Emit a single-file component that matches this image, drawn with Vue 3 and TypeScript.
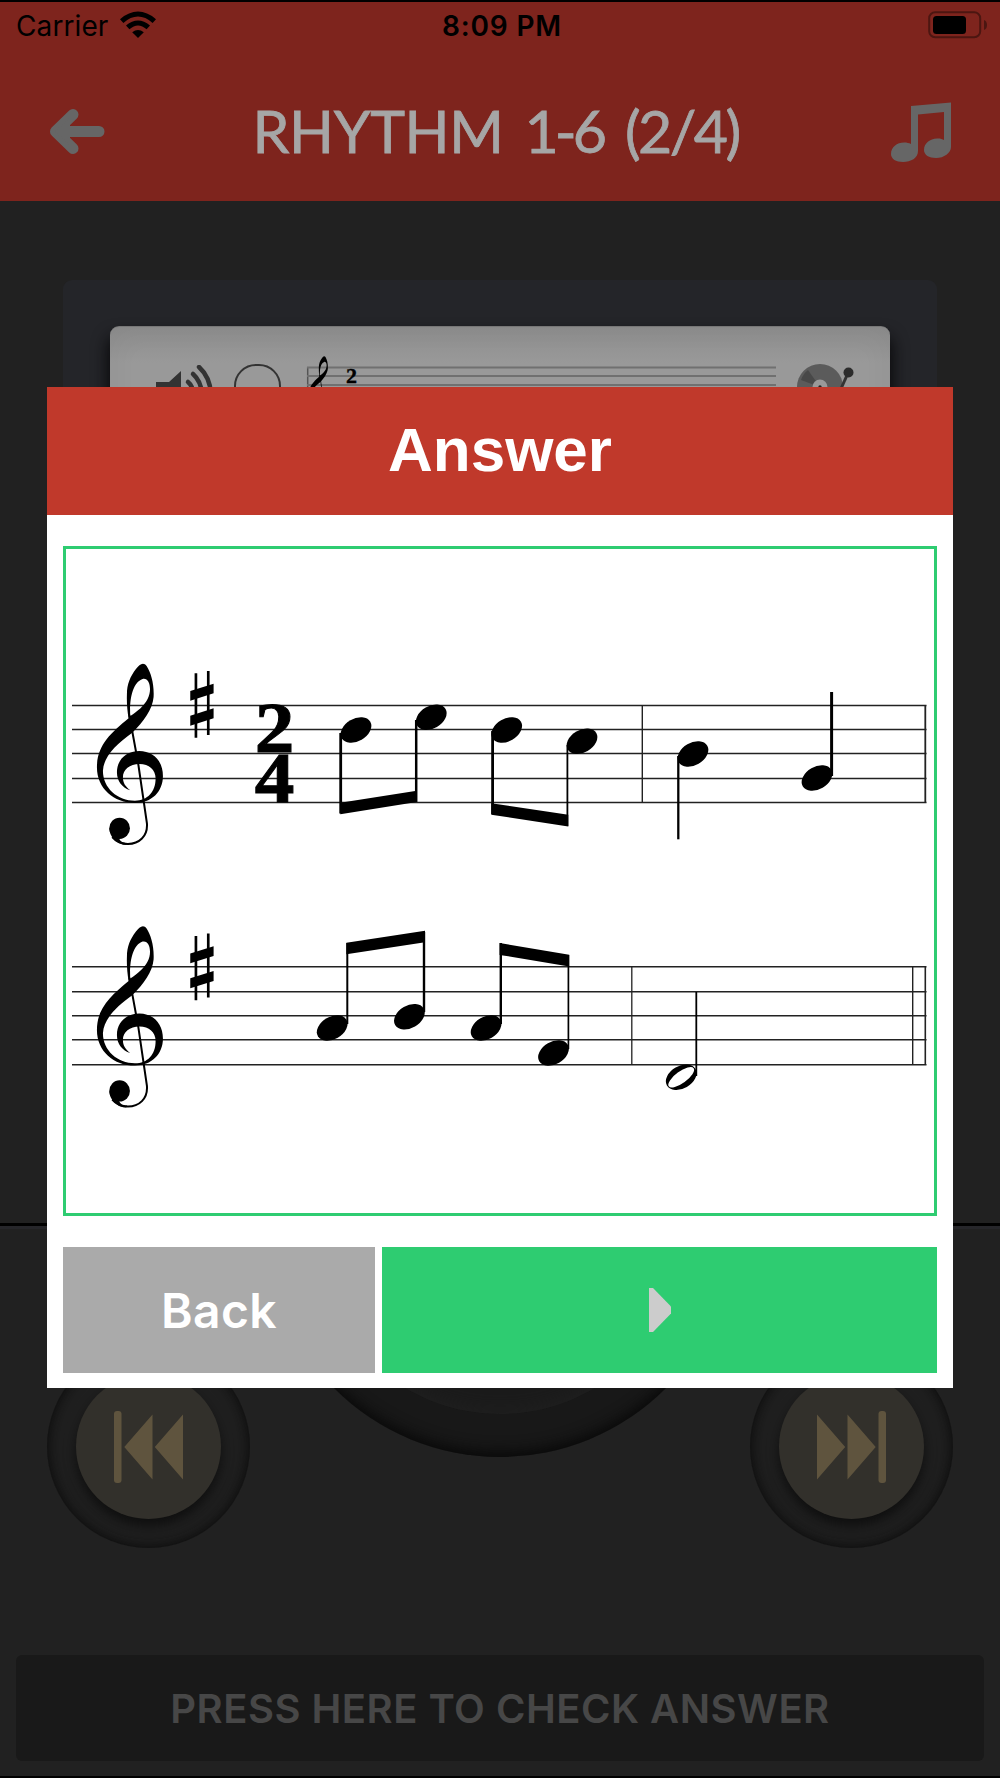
<script setup lang="ts">
interface INote {
    x: number;
    y: number;
    stemX: number;
    stemFrom: number;
    stemTo: number;
    stemWidth: number;
    half?: boolean;
}

interface IBarline {
    x: number;
    width: number;
}

interface IStaff {
    lines: number[];
    clefY: number;
    notes: INote[];
    beams: string[];
    barlines: IBarline[];
}

const staves: IStaff[] = [
    {
        lines: [705.4, 729.4, 753.4, 778.4, 802.5],
        clefY: 640,
        notes: [
            { x: 356, y: 730, stemX: 340.7, stemFrom: 733, stemTo: 813.5, stemWidth: 2.8 },
            { x: 431.3, y: 717.3, stemX: 416.2, stemFrom: 720, stemTo: 802, stemWidth: 2.5 },
            { x: 506.7, y: 730, stemX: 492.6, stemFrom: 731, stemTo: 814, stemWidth: 2.8 },
            { x: 582, y: 741.3, stemX: 567.4, stemFrom: 745, stemTo: 826, stemWidth: 1.8 },
            { x: 693, y: 754, stemX: 678.3, stemFrom: 756, stemTo: 839.3, stemWidth: 2.3 },
            { x: 817, y: 778, stemX: 831.6, stemFrom: 692, stemTo: 776, stemWidth: 3 },
        ],
        beams: [
            "340.3,802.7 416.8,790.7 416.8,802 340.3,814.3",
            "491.3,803.3 568.3,814.8 568.3,826.4 491.3,814.8",
        ],
        barlines: [
            { x: 642.3, width: 1.4 },
            { x: 925.3, width: 1.8 },
        ],
    },
    {
        lines: [966.8, 991.8, 1015.8, 1039.8, 1064.8],
        clefY: 902.6,
        notes: [
            { x: 332.2, y: 1028, stemX: 347.3, stemFrom: 943, stemTo: 1024, stemWidth: 2 },
            { x: 409.4, y: 1016.7, stemX: 424, stemFrom: 932, stemTo: 1012, stemWidth: 2.4 },
            { x: 486.1, y: 1028, stemX: 500.8, stemFrom: 943, stemTo: 1024, stemWidth: 2.4 },
            { x: 553.5, y: 1053, stemX: 568.4, stemFrom: 955, stemTo: 1049, stemWidth: 1.7 },
            { x: 681.2, y: 1077.3, stemX: 696.3, stemFrom: 992, stemTo: 1076, stemWidth: 1.8, half: true },
        ],
        beams: [
            "346.4,942.7 425,930.7 425,942.3 346.4,954.2",
            "499.6,943 569.2,954.7 569.2,966.4 499.6,954.9",
        ],
        barlines: [
            { x: 631.8, width: 1.3 },
            { x: 912.7, width: 1.4 },
            { x: 925.3, width: 1.6 },
        ],
    },
];

const trackLines = [11.5, 20, 29];
</script>

<template>
    <div class="screen">
        <!-- shared treble clef -->
        <svg class="defs">
            <defs>
                <g id="clef">
                    <path
                        fill-rule="evenodd"
                        d="M250 71C243 71 236 78 229 87C212 109 202 133 202 162C201 188 203 211 207 235C151 281 112 318 112 382C112 446 163 489 226 489C276 489 310 455 310 408C310 362 280 333 239 333C200 333 172 359 172 397C172 423 188 444 212 451C198 440 190 430 190 412C190 389 210 372 240 372C268 372 288 389 288 415C288 456 264 482 226 482C174 482 130 444 130 392C132 350 169 313 218 278C252 246 279 207 282 171C284 131 274 98 261 78C258 73 254 71 250 71ZM212 228C209 180 218 128 249 117C271 112 278 151 264 177C252 199 235 213 212 228Z"
                    />
                    <path
                        d="M209 225L236 372L262 550C265 589 238 612 205 612C187 612 169 604 158 591"
                        fill="none"
                        stroke="#000"
                        stroke-width="6"
                    />
                    <ellipse cx="180" cy="565" rx="31" ry="32" />
                    <path d="M149 565C150 592 171 612 200 615L203 609C188 608 181 603 179 596Z" />
                </g>
            </defs>
        </svg>

        <header class="header">
            <div class="status">
                <div class="carrier">
                    <span>Carrier</span>
                    <svg width="38" height="28" viewBox="0 0 38 28">
                        <path d="M1 8.2Q19-7 37 8.2L33.6 12Q19-.8 4.4 12Z" />
                        <path d="M7 14.5Q19 4.5 31 14.5L27.6 18.3Q19 10.5 10.4 18.3Z" />
                        <path d="M13.2 21.3Q19 16.5 24.8 21.3L19 27Z" />
                    </svg>
                </div>
                <span class="time">8:09 PM</span>
                <svg class="battery" width="60" height="28" viewBox="0 0 60 28">
                    <rect x="1.2" y="1.2" width="51" height="25" rx="6" fill="none" stroke="#4c1611" stroke-width="2" />
                    <rect x="5" y="5" width="33" height="18" rx="3.5" />
                    <path d="M56 9Q59 10 59 14T56 19Z" fill="#4c1611" />
                </svg>
            </div>
            <div class="nav">
                <svg width="56" height="47" viewBox="0 0 56 47">
                    <path
                        d="M50 23.5H8M24 6.5L6.5 23.5L24 40.5"
                        fill="none"
                        stroke="#666"
                        stroke-width="11"
                        stroke-linecap="round"
                        stroke-linejoin="round"
                    />
                    <path d="M6 23.5L21 10V37Z" fill="#666" />
                </svg>
                <h1>
                    <span class="word">RHYTHM</span>
                    <span class="number">1-6</span>
                    <span class="beat">(2/4)</span>
                </h1>
                <svg class="song" width="60" height="60" viewBox="0 0 60 60">
                    <path
                        fill="#666"
                        d="M20 4L60 .5V45C60 51 53 56 45 56C38 56 33 53 33 48C33 41 39 37 46 36.5C49 36.2 51 37 53 38V10L27 12.5V49C27 56 20 60 12 60C5 60 0 57 0 52C0 45 6 40.5 13 40.5C16 40.5 18 41 20 42Z"
                    />
                </svg>
            </div>
        </header>

        <main class="stage">
            <div class="panel">
                <div class="track">
                    <svg class="speaker" width="58" height="60" viewBox="0 0 58 60">
                        <path d="M0 17H13L25 6V46L13 35H0Z" fill="#333" />
                        <g fill="none" stroke="#333" stroke-width="4.5" stroke-linecap="round">
                            <path d="M32 17Q37 21 37 29" />
                            <path d="M37 9Q45 16 46 29" />
                            <path d="M43 2Q54 12 55 29" />
                        </g>
                    </svg>
                    <div class="check"></div>
                    <svg class="mini-staff" width="469" height="60" viewBox="0 0 469 60">
                        <path d="M.7 11V48" stroke="#555" stroke-width="1.5" />
                        <path
                            v-for="y in trackLines"
                            :key="y"
                            :d="`M0 ${y}H469`"
                            stroke="#707070"
                            stroke-width="2"
                        />
                        <use href="#clef" transform="translate(-11 -8.5) scale(.113 .123)" />
                        <text x="44.5" y="27" class="meter small">2</text>
                    </svg>
                    <svg class="disc" width="60" height="60" viewBox="0 0 60 60">
                        <circle cx="23" cy="23" r="23" fill="#5b5b5b" />
                        <path d="M23 23L4 16A20 20 0 0 1 11 6Z" fill="#484848" />
                        <circle cx="23" cy="23" r="7.5" fill="#999" />
                        <circle cx="23" cy="23" r="1.7" fill="#222" />
                        <path d="M51 9L43 27" stroke="#333" stroke-width="3" />
                        <circle cx="51.5" cy="8.5" r="5" fill="#2c2c2c" />
                    </svg>
                </div>
            </div>
        </main>

        <section class="controls">
            <div class="knob">
                <div class="cap">
                    <svg width="69" height="72" viewBox="0 0 69 72">
                        <rect width="7.5" height="72" rx="3" />
                        <path d="M10.3 36L38.5 3.5V68.5ZM40.8 36L69 3.5V68.5Z" />
                    </svg>
                </div>
            </div>
            <div class="dial">
                <div class="dial-face"></div>
            </div>
            <div class="knob">
                <div class="cap">
                    <svg class="flip" width="69" height="72" viewBox="0 0 69 72">
                        <rect width="7.5" height="72" rx="3" />
                        <path d="M10.3 36L38.5 3.5V68.5ZM40.8 36L69 3.5V68.5Z" />
                    </svg>
                </div>
            </div>
        </section>

        <footer class="footer">
            <button class="check-answer">PRESS HERE TO CHECK ANSWER</button>
        </footer>

        <div class="modal">
            <h2>Answer</h2>
            <div class="modal-body">
                <svg class="score" viewBox="66 549 868 664">
                    <g v-for="(staff, i) in staves" :key="i">
                        <path
                            v-for="y in staff.lines"
                            :key="y"
                            :d="`M72 ${y}H926.5`"
                            class="line"
                        />
                        <path
                            v-for="bar in staff.barlines"
                            :key="bar.x"
                            :d="`M${bar.x} ${staff.lines[0]}V${staff.lines[4]}`"
                            :stroke-width="bar.width"
                            stroke="#222"
                        />
                        <g :transform="`translate(59.6 ${staff.clefY}) scale(.33333)`">
                            <use href="#clef" />
                            <path d="M409 100V293M446 93V285" stroke="#000" stroke-width="8" />
                            <path d="M392 153L462 131V160L392 182ZM392 227L462 205V235L392 257Z" />
                        </g>
                        <g v-for="note in staff.notes" :key="note.x">
                            <path
                                :d="`M${note.stemX} ${note.stemFrom}V${note.stemTo}`"
                                :stroke-width="note.stemWidth"
                                stroke="#000"
                            />
                            <g :transform="`translate(${note.x} ${note.y})`">
                                <ellipse rx="16.5" ry="11.2" transform="rotate(-30)" />
                                <ellipse
                                    v-if="note.half"
                                    rx="15.4"
                                    ry="5.8"
                                    fill="#fff"
                                    transform="rotate(-36)"
                                />
                            </g>
                        </g>
                        <polygon v-for="beam in staff.beams" :key="beam" :points="beam" />
                    </g>
                    <g transform="translate(274.6 0) scale(1.1 1)">
                        <text y="752.5" class="meter">2</text>
                        <text y="802" class="meter">4</text>
                    </g>
                </svg>
                <div class="actions">
                    <button class="back">Back</button>
                    <button class="next">
                        <svg width="22" height="44" viewBox="0 0 22 44">
                            <path d="M0 0H4L22 18.5V25.5L4 44H0Z" fill="#ccc" />
                        </svg>
                    </button>
                </div>
            </div>
        </div>
    </div>
</template>

<style>
body {
    background: #212121;
}
</style>

<style scoped>
* {
    box-sizing: border-box;
}

.screen {
    position: relative;
    display: flex;
    flex-direction: column;
    width: 1000px;
    height: 1778px;
    overflow: hidden;
    background: #212121;
    border-top: 2px solid #000;
    border-bottom: 2px solid #000;
    font-family: Inter, "Liberation Sans", sans-serif;
}

.defs {
    position: absolute;
    width: 0;
    height: 0;
}

svg {
    display: block;
    flex: none;
}

h1,
h2 {
    margin: 0;
}

button {
    border: 0;
    padding: 0;
    font-family: inherit;
}

.header {
    height: 199px;
    flex: none;
    background: #7e241d;
}

.status {
    display: grid;
    grid-template-columns: 1fr auto 1fr;
    height: 46px;
    padding: 1px 12px 0 16px;
    align-items: center;
    font-size: 28px;
    line-height: 46px;
}

.carrier {
    display: flex;
    gap: 11px;
    align-items: center;
    letter-spacing: 0.1px;
}

.carrier svg {
    margin-top: -2px;
}

.time {
    font-weight: 600;
    letter-spacing: 0.8px;
}

.battery {
    justify-self: end;
    margin-top: -2px;
}

.nav {
    display: flex;
    align-items: center;
    justify-content: space-between;
    height: 168px;
    padding: 0 49px 0 49px;
    margin-top: -1px;
}

.nav h1 {
    display: flex;
    width: 496px;
    margin-left: 5px;
    font-family: Lato, sans-serif;
    font-size: 59px;
    font-weight: 400;
    line-height: 70px;
    color: #a6a6a6;
    white-space: nowrap;
    -webkit-text-stroke: 0.8px #a6a6a6;
}

.word {
    letter-spacing: -0.4px;
}

.number {
    margin-left: 21px;
    letter-spacing: -4px;
}

.beat {
    margin-left: 22px;
    letter-spacing: -2.6px;
}

.song {
    margin-top: 2px;
}

.stage {
    height: 1022px;
    flex: none;
    padding: 79px 63px 0;
}

.panel {
    height: 860px;
    padding: 46px 47px;
    border-radius: 9px;
    background: #242529;
}

.track {
    display: flex;
    height: 170px;
    padding: 38px 0 0 46px;
    border-radius: 9px;
    background: linear-gradient(#8d8d8d, #999 36px);
    border-top: 1px solid #777;
    box-shadow:
        inset 0 0 30px rgba(0, 0, 0, 0.05),
        0 12px 16px 2px #08080a;
}

.speaker {
    margin-right: 20px;
}

.check {
    width: 47px;
    height: 47px;
    flex: none;
    margin: -1px 26px 0 0;
    border: 2px solid #333;
    border-radius: 22px;
}

.mini-staff {
    margin-top: -9px;
    overflow: visible;
}

.disc {
    margin: -1px 0 0 21px;
}

.controls {
    display: flex;
    justify-content: space-between;
    height: 420px;
    flex: none;
    padding: 0 47px;
    border-top: 3px solid #000;
    box-shadow: inset 0 3px #26262a;
}

.knob {
    display: grid;
    place-items: center;
    width: 203px;
    height: 203px;
    margin-top: 119px;
    border-radius: 50%;
    background: #1f1f1f;
    box-shadow: inset 0 0 14px #080808;
}

.cap {
    display: grid;
    place-items: center;
    width: 145px;
    height: 145px;
    border-radius: 50%;
    background: #32302b;
    box-shadow: 0 7px 12px #0f0f0f;
}

.cap svg {
    fill: #5f543e;
}

.flip {
    transform: scaleX(-1);
}

.dial {
    display: grid;
    place-items: center;
    width: 468px;
    height: 468px;
    margin-top: -237px;
    border-radius: 50%;
    background: #181818;
    box-shadow: inset 0 -5px 14px #090909;
}

.dial-face {
    width: 370px;
    height: 370px;
    margin-top: 12px;
    border-radius: 50%;
    background: #1b1b1b;
    box-shadow: inset 0 0 20px #212121;
}

.footer {
    padding: 12px 16px 0;
}

.check-answer {
    display: block;
    width: 968px;
    height: 106px;
    border-radius: 6px;
    background: #191919;
    color: #474747;
    font-size: 40px;
    font-weight: 600;
    letter-spacing: 0.5px;
}

.modal {
    position: absolute;
    top: 385px;
    left: 47px;
    width: 906px;
    height: 1001px;
    background: #fff;
}

.modal h2 {
    height: 128px;
    background: #c0392b;
    color: #fff;
    font-family: "Liberation Sans", Arial, sans-serif;
    font-size: 62px;
    font-weight: 700;
    line-height: 126px;
    text-align: center;
}

.modal-body {
    padding: 31px 16px 15px;
}

.score {
    width: 874px;
    height: 670px;
    border: 3px solid #2ecc71;
}

.line {
    stroke: #222;
    stroke-width: 1.5;
}

.meter {
    font-family: "Liberation Serif", serif;
    font-size: 72px;
    font-weight: 700;
    text-anchor: middle;
    stroke: #000;
    stroke-width: 1px;
}

.meter.small {
    font-size: 22px;
    stroke-width: 0.4px;
}

.actions {
    display: flex;
    gap: 7px;
    height: 126px;
    margin-top: 31px;
}

.back {
    width: 312px;
    background: #aaa;
    color: #fff;
    font-size: 48px;
    font-weight: 600;
    letter-spacing: 0.4px;
}

.next {
    display: grid;
    place-items: center;
    flex: 1;
    background: #2ecc71;
}
</style>
